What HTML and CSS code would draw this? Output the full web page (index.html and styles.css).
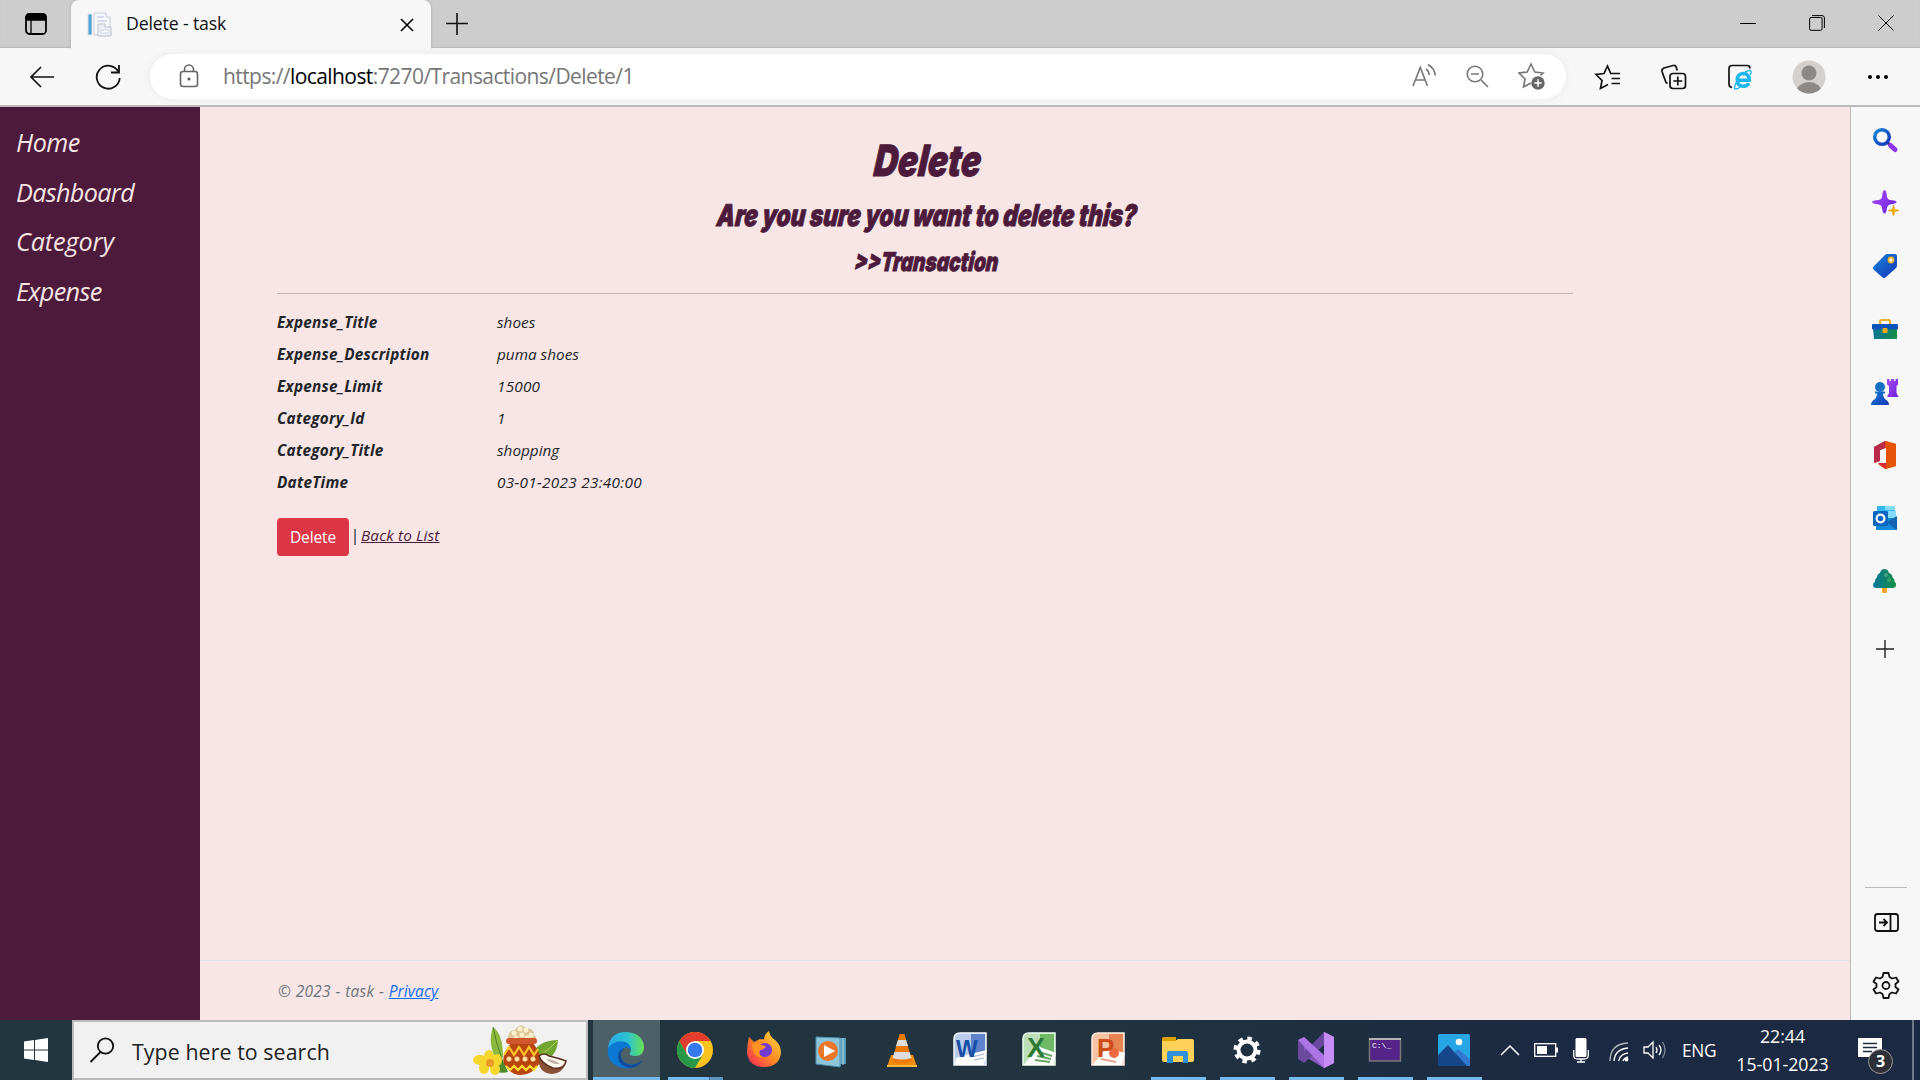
FILE: index.html
```html
<!DOCTYPE html>
<html lang="en">
<head>
<meta charset="utf-8">
<title>Delete - task</title>
<link rel="stylesheet" href="styles.css">
</head>
<body>
<div class="screen">
  <header class="tabs">
    <div class="workspace"><svg width="24" height="24" viewBox="0 0 24 24"><rect x="2" y="2" width="20" height="20" rx="3.5" fill="none" stroke="#000" stroke-width="1.8"/><path d="M2 8V5a3 3 0 0 1 3-3h14a3 3 0 0 1 3 3v3zM7 8v13" stroke="#000" stroke-width="1.3"/></svg></div>
    <div class="tab">
      <svg width="25" height="25" viewBox="0 0 25 25"><path d="M7 1h12l4 4v18H7z" fill="#f6f8fb" stroke="#c9ced8"/><path d="M19 1v4h4" fill="#fff" stroke="#c9ced8"/><path d="M1 2h4v21H1z" fill="#4ba0d6" stroke="#dde5ec"/><path d="M10 5h7M10 9h10" stroke="#d7dbea" stroke-width="2"/><path d="M11 12h7v3h6v9H11z" fill="#edf0f6" stroke="#b9bfcb"/><path d="M14 18h8v3h-8z" fill="#fff" stroke="#cfd3dd"/></svg>
      <span class="tab-title">Delete - task</span>
      <svg class="tab-close" width="14" height="14" viewBox="0 0 14 14"><path d="M1 1l12 12M13 1L1 13" stroke="#000" stroke-width="1.6"/></svg>
    </div>
    <svg class="new-tab" width="22" height="22" viewBox="0 0 22 22"><path d="M11 0v22M0 10.500h22" stroke="#111" stroke-width="1.6"/></svg>
    <div class="win">
      <svg width="16" height="16" viewBox="0 0 16 16"><path d="M0 8.500h16" stroke="#000"/></svg>
      <svg width="16" height="16" viewBox="0 0 16 16"><rect x=".6" y="2.500" width="12.500" height="12.800" rx="1.500" fill="none" stroke="#000"/><path d="M3 .6h10a2.400 2.400 0 0 1 2.400 2.400v10" fill="none" stroke="#000"/></svg>
      <svg width="16" height="16" viewBox="0 0 16 16"><path d="M.5.5l15 15M15.500.5l-15 15" stroke="#000"/></svg>
    </div>
  </header>

  <div class="toolbar">
    <svg class="back" width="26" height="24" viewBox="0 0 26 24"><path d="M25 12H2M12 2L2 12l10 10" fill="none" stroke="#111" stroke-width="1.7"/></svg>
    <svg class="reload" width="26" height="26" viewBox="0 0 26 26"><path d="M23.500 8A11.500 11.500 0 1 0 24.700 14" fill="none" stroke="#111" stroke-width="1.8"/><path d="M24 1v7.500h-8" fill="none" stroke="#111" stroke-width="1.8"/></svg>
    <div class="address">
      <svg class="lock" width="20" height="24" viewBox="0 0 20 24"><rect x="1.500" y="7.500" width="17" height="15" rx="2.500" fill="none" stroke="#666" stroke-width="1.6"/><path d="M5.500 7V5.500a4.500 4.500 0 0 1 9 0V7" fill="none" stroke="#666" stroke-width="1.6"/><circle cx="10" cy="15" r="1.500" fill="#555"/></svg>
      <span class="url">https://<b>localhost</b>:7270/Transactions/Delete/1</span>
      <div class="address-actions">
        <svg width="26" height="26" viewBox="0 0 26 26" fill="none" stroke="#767676" stroke-width="1.6"><path d="M1 23L8.300 4.500 15.500 23M3.500 17h9.500M14 6c2 1.200 3 3.200 3.200 6M16 1.500c4.500 2.500 6.700 6 7.300 11"/></svg>
        <svg width="26" height="26" viewBox="0 0 26 26" fill="none" stroke="#767676" stroke-width="1.6"><circle cx="10" cy="11" r="7.800"/><path d="M16 17l7 7M6 11h8"/></svg>
        <svg width="28" height="28" viewBox="0 0 28 28"><path d="M13 21l-7.500 4 1.500-8-6-6 8.200-1L13 2l3.800 8 8.200 1-2.500 2.300" fill="none" stroke="#767676" stroke-width="1.6"/><circle cx="20" cy="21" r="6.700" fill="#666"/><path d="M20 17.300v7.400M16.300 21h7.400" stroke="#fff" stroke-width="1.500"/></svg>
      </div>
    </div>
    <div class="tools">
      <svg width="28" height="28" viewBox="0 0 28 28" fill="none" stroke="#111" stroke-width="1.700"><path d="M14 21.500l-7.500 4 1.500-8-6-6 8-1L13.500 3l3.200 7.500H26M17.500 15.500H26M17.500 20.500H26"/></svg>
      <svg width="28" height="28" viewBox="0 0 28 28" fill="none" stroke="#111" stroke-width="1.700"><rect x="10" y="10.500" width="15.500" height="15" rx="3"/><path d="M17.800 13.500v9M13.300 18h9M7.500 20.500L6 19.500 2 8.500Q1.500 6 4 5l9-2.500q2.500-.5 3.200 1.500l1 3.500"/></svg>
      <svg width="28" height="28" viewBox="0 0 28 28"><path d="M6 24.500q-3-.5-3-3.500V5.500Q3 2.500 6 2.500h15q3 0 3 3" fill="none" stroke="#111" stroke-width="1.700"/><path d="M11.500 17.300H23.300Q23 10.500 17.300 10.500 11.300 10.800 11.300 17 11.500 23.300 17.300 23.300 21.300 23.300 22.800 20.300" fill="none" stroke="#1cb5ee" stroke-width="3.600"/><path d="M10.500 19q-3.500 7-1 7 2 0 4.500-1.800M19 9q5-2.500 6-.8.5 1.300-.8 4" fill="none" stroke="#1cb5ee" stroke-width="1.400"/></svg>
      <svg width="34" height="34" viewBox="0 0 34 34"><clipPath id="av"><circle cx="17" cy="17" r="16.500"/></clipPath><g clip-path="url(#av)"><circle cx="17" cy="17" r="17" fill="#d3d0cd"/><circle cx="17" cy="13" r="7.500" fill="#8d8986"/><ellipse cx="17" cy="32" rx="12.500" ry="10" fill="#8d8986"/></g></svg>
      <svg width="28" height="28" viewBox="0 0 28 28"><circle cx="6" cy="14" r="2"/><circle cx="14" cy="14" r="2"/><circle cx="22" cy="14" r="2"/></svg>
    </div>
  </div>

  <div class="viewport">
    <nav class="sidebar"><a>Home</a><a>Dashboard</a><a>Category</a><a>Expense</a></nav>
    <div class="page">
      <main class="container">
        <h1><span>Delete</span></h1>
        <h3><span>Are you sure you want to delete this?</span></h3>
        <h4><span>&gt;&gt;Transaction</span></h4>
        <hr>
        <dl>
          <dt>Expense_Title</dt><dd>shoes</dd>
          <dt>Expense_Description</dt><dd>puma shoes</dd>
          <dt>Expense_Limit</dt><dd class="num">15000</dd>
          <dt>Category_Id</dt><dd class="num">1</dd>
          <dt>Category_Title</dt><dd>shopping</dd>
          <dt>DateTime</dt><dd class="date">03-01-2023 23:40:00</dd>
        </dl>
        <form class="actions"><button type="button">Delete</button><i class="bar"></i><a>Back to List</a></form>
      </main>
      <footer><p>© 2023 - task - <a>Privacy</a></p></footer>
    </div>
    <aside class="rail">
      <svg width="28" height="28" viewBox="0 0 28 28"><defs><linearGradient id="bl" x2="1" y2="1"><stop stop-color="#1586d8"/><stop offset="1" stop-color="#1633b8"/></linearGradient><linearGradient id="pu" x2="1" y2="1"><stop stop-color="#a94bf8"/><stop offset="1" stop-color="#6a20dc"/></linearGradient><linearGradient id="gr" x2="1"><stop stop-color="#07749b"/><stop offset="1" stop-color="#169044"/></linearGradient></defs><path d="M17 17l3 3" stroke="#333" stroke-width="3"/><path d="M19.500 19.500l4.500 4" stroke="#8a35ea" stroke-width="5" stroke-linecap="round"/><circle cx="11" cy="11" r="7.300" fill="#fff" stroke="url(#bl)" stroke-width="3.500"/></svg>
      <svg width="28" height="28" viewBox="0 0 28 28"><path d="M13.500 1q2 0 2.500 7 .5 2.500 3 3 6.500.5 6.500 2t-6.500 2.500q-2.500.5-3 3-.5 6-2.500 6t-2.500-6q-.5-2.500-3-3Q1 14.500 1 13t7-2q2.500-.5 3-3 .5-7 2.500-7z" fill="url(#pu)"/><path d="M22.500 16q1 0 1.300 4.200 4.200.3 4.200 1.300t-4.200 1.300q-.3 4.200-1.300 4.200t-1.300-4.200Q17 22.500 17 21.500t4.200-1.300Q21.500 16 22.500 16z" fill="#f1a90d"/></svg>
      <svg width="28" height="28" viewBox="0 0 28 28"><path d="M14 3q1-1 2-1h8q2 0 2 2v9q0 2-1 3L15 25q-2 2-4 0l-8-7q-2-2 0-4z" fill="url(#bl)"/><circle cx="20" cy="8" r="2.500" fill="#fff" stroke="#f2b431" stroke-width="1.800"/></svg>
      <svg width="28" height="28" viewBox="0 0 28 28"><path d="M9 9V6.500Q9 5 10.500 5h7Q19 5 19 6.500V9" fill="none" stroke="#eeb12d" stroke-width="2.200"/><path d="M2 13h24v11H3z" fill="url(#gr)"/><rect x="1" y="9" width="26" height="5.500" rx="1" fill="#0b54b8"/><rect x="11.500" y="13" width="5" height="5" rx="1" fill="#f2a91c"/></svg>
      <svg width="28" height="28" viewBox="0 0 28 28"><path d="M16 1h2.500v2H20V1h3v2h1.500V1H27v5.500l-1.500 1.500v7l2 4H16l2-4V8l-2-1.500z" fill="url(#pu)"/><circle cx="9" cy="9" r="5" fill="#1870c4"/><path d="M4 13.500h10v2h-2q0 5 4 7 2 1 2 4.500H0q0-3.500 2-4.500 4-2 4-7H4z" fill="url(#bl)"/></svg>
      <svg width="28" height="30" viewBox="0 0 28 30"><path d="M14 1l11 3v22l-11 3-7-5 8-1V8l-6 2v11l-6 2V7z" fill="#e04412"/><path d="M14 1v7l-5 2v11l-6 2V7z" fill="#b8294a"/><path d="M15 1l10 3v22l-10 3z" fill="#e55409"/><path d="M7 23h8v6z" fill="#d42b32"/></svg>
      <svg width="28" height="28" viewBox="0 0 28 28"><path d="M6 2h18v12H6z" fill="#35b8f1"/><path d="M14 2h10v4H14zM17 7h8v7h-8z" fill="#83ddf7"/><path d="M5 14h21v12H5z" fill="#1389d8"/><path d="M16 18l10-6v14z" fill="#1164b0"/><rect x="2" y="7" width="15" height="15" rx="1.500" fill="#0967c2"/><circle cx="9.500" cy="14.500" r="3.900" fill="none" stroke="#fff" stroke-width="2.200"/></svg>
      <svg width="28" height="28" viewBox="0 0 28 28"><rect x="11" y="20" width="5" height="6" rx="1.500" fill="#f0a423"/><path d="M13.500 2q3.500 0 4.500 4 3.500 1 3.500 4.500 2.500 1.500 2 4 2 1.500 1.500 4-.5 2.500-3.500 2.500h-16Q2.500 21 2 18.500q0-2.500 2-4-.5-2.500 2-4Q6 7 9 6q1-4 4.500-4z" fill="url(#gr)"/><circle cx="15" cy="8" r="2" fill="#43a181"/><circle cx="18" cy="13" r="2" fill="#37a36c"/></svg>
      <svg class="rail-add" width="28" height="28" viewBox="0 0 28 28"><path d="M14 5v18M5 14h18" stroke="#222" stroke-width="1.400"/></svg>
      <div class="rail-foot">
        <svg width="28" height="24" viewBox="0 0 28 24" fill="none" stroke="#111" stroke-width="1.800"><rect x="3" y="3" width="23" height="17" rx="2.500"/><path d="M18.500 3v17M7 11.500h8M11.500 8l3.500 3.500-3.500 3.500"/></svg>
        <svg width="28" height="28" viewBox="0 0 28 28" fill="none" stroke="#111" stroke-width="1.800"><path d="M11.500 2h5l1 4 2.500 1.500 4-1 2.500 4-3 2.500v3l3 2.500-2.500 4-4-1-2.500 1.500-1 4h-5l-1-4L8 21.500l-4 1-2.500-4 3-2.500v-3l-3-2.500 2.500-4 4 1L10.500 6z" stroke-linejoin="round"/><circle cx="14" cy="14.500" r="3.500"/></svg>
      </div>
    </aside>
  </div>

  <div class="taskbar">
    <div class="start"><svg width="24" height="24" viewBox="0 0 24 24" fill="#fff"><path d="M0 3.400l10-1.400v9.500H0zM11 1.900L24 0v11.500H11zM0 12.500h10V22L0 20.600zM11 12.500h13V24l-13-1.900z"/></svg></div>
    <div class="search">
      <svg width="26" height="26" viewBox="0 0 26 26" fill="none" stroke="#111" stroke-width="1.800"><circle cx="16.500" cy="9" r="7.700"/><path d="M11.500 15L1.500 25"/></svg>
      <span>Type here to search</span>
      <svg class="pongal" width="94" height="52" viewBox="0 0 94 52"><path d="M20 3q10 7 10 30l-6 4Q14 20 20 3z" fill="#8cb93e"/><path d="M20 3q3 16 9 32" stroke="#53842a" fill="none"/><path d="M58 31q8-15 27-15-1 19-19 22z" fill="#71a62f"/><path d="M59 35q12-4 25-18" stroke="#bad15c" fill="none"/><path d="M19 47q10 3 16 1l-6-14z" fill="#4f8d2c"/><path d="M35 15Q35 6 42 6q5-8 11-2 8 0 8 7 3 2 2 6H35z" fill="#dcc69a"/><g fill="#fff0cc"><circle cx="41" cy="9" r="2.500"/><circle cx="47" cy="5" r="2.500"/><circle cx="53" cy="6" r="2.500"/><circle cx="58" cy="11" r="2.500"/><circle cx="49" cy="11" r="2.500"/><circle cx="43" cy="14" r="2.500"/><circle cx="54" cy="14" r="2.500"/></g><path d="M38 19h22q10 13 6 21-7 11-18 11-10 0-17-11-3-9 7-21z" fill="#b94510"/><rect x="33" y="14" width="31" height="6" rx="3" fill="#d0562b"/><path d="M31 31l5-8 5 8 5-8 5 8 5-8 5 8 4-6" fill="none" stroke="#ffc52c" stroke-width="2.200"/><g fill="#ffe1a0"><circle cx="36" cy="35" r="2.500"/><circle cx="44" cy="35" r="2.500"/><circle cx="52" cy="35" r="2.500"/><circle cx="60" cy="35" r="2.500"/></g><path d="M33 42l4 4 4-4 4 4 4-4 4 4 4-4 4 4 3-4" fill="none" stroke="#ffdf2d" stroke-width="2.200"/><g fill="#f5d62c"><ellipse cx="16" cy="33" rx="5" ry="7"/><ellipse cx="7" cy="36" rx="7" ry="5"/><ellipse cx="24" cy="36" rx="5" ry="6"/><ellipse cx="11" cy="44" rx="5" ry="6"/><ellipse cx="22" cy="45" rx="5" ry="6"/></g><circle cx="17" cy="39" r="4" fill="#ec9923"/><path d="M66 32q-2 17 13 18 12-1 14-13z" fill="#885034"/><path d="M66 32q5-4 10 0 9 2 17 5-2 9-13 7Q69 40 66 32z" fill="#fffaf0" stroke="#5b3322" stroke-width="1.500"/><path d="M73 35q8 0 14 5-8 1-14-5z" fill="#c4b5a9"/></svg>
    </div>
    <div class="apps">
      <div class="app active"><svg width="38" height="38" viewBox="0 0 38 38"><defs><linearGradient id="e1"><stop stop-color="#28a8e8"/><stop offset=".55" stop-color="#2bc3d1"/><stop offset="1" stop-color="#6be254"/></linearGradient></defs><path d="M1 17Q3 1 19 1q17 1 18 15 0 9-9 9-6 0-5-3 2-4-1-7-8-6-21 2z" fill="url(#e1)"/><path d="M1 17Q8 8 18 11q6 2 6 8-3-4-7-2-6 5-2 12 5 7 18 3-7 7-17 5Q-1 33 1 17z" fill="#0b78d3"/><path d="M17 17q-6 7-1 13 7 8 20-1-4 7-13 8-11-2-12-10-1-7 6-10z" fill="#124d9c"/></svg></div>
      <div class="app chrome"><svg width="38" height="38" viewBox="0 0 38 38"><circle cx="19" cy="19" r="18" fill="#fcc31e"/><path d="M3.400 10A18 18 0 0 1 34.600 10H19l-8 13.500z" fill="#e33b2e"/><path d="M3.400 10A18 18 0 0 0 19 37l7.800-13.500H11z" fill="#279847"/><circle cx="19" cy="19" r="9" fill="#fff"/><circle cx="19" cy="19" r="7.300" fill="#3579ec"/></svg></div>
      <div class="app"><svg width="38" height="38" viewBox="0 0 38 38"><defs><linearGradient id="ff" x1="1" x2="0" y2="1"><stop stop-color="#ffe33d"/><stop offset=".5" stop-color="#ff8a23"/><stop offset="1" stop-color="#f5205d"/></linearGradient></defs><path d="M4 6l5 5 6-3q5 0 4 1 0-6 5-9 1 6 6 9 6 5 6 13-2 14-17 14T2 22Q2 14 4 6z" fill="url(#ff)"/><circle cx="20" cy="19" r="7" fill="#6f3bd0"/><path d="M7 13q5-3 9 1l5 1q-2 4-6 4-2 5 3 8-10 0-11-14z" fill="#ff9421"/></svg></div>
      <div class="app nudge"><svg width="38" height="38" viewBox="0 0 38 38"><path d="M26 7h8v26h-8z" fill="#569dbb"/><path d="M28 7v28M31 7v27" stroke="#b9dde9"/><path d="M4 6l24 1v29L4 33z" fill="#8fc5d9" stroke="#4d91b0"/><circle cx="16" cy="20" r="10" fill="#ee7627"/><path d="M12 14l11 6-11 6z" fill="#fff"/></svg></div>
      <div class="app"><svg width="38" height="38" viewBox="0 0 38 38"><path d="M8 24h22l4 12H4z" fill="#f48a0b"/><path d="M16.500 3h5L29 30q-10 5-20 0z" fill="#ed7909"/><path d="M15 9h8l2 6H13zM11.500 21h15l2 6q-10 3-19 0z" fill="#ddd"/><path d="M4 35h30" stroke="#ffba3d" stroke-width="2"/></svg></div>
      <div class="app office-app"><svg width="38" height="38" viewBox="0 0 38 38"><path d="M9 2h26v32H3V8q0-6 6-6z" fill="#b9ccec" stroke="#f3f8ff" stroke-width="1.500"/><path d="M20 3h14v20H20z" fill="#5f82cb"/><path d="M5 27l14-4 17-4-3 15H4z" fill="#fff"/><path d="M21 26l12-3M23 29l10-2" stroke="#9cafc9"/><text x="5" y="26" class="office w">W</text></svg></div>
      <div class="app office-app"><svg width="38" height="38" viewBox="0 0 38 38"><path d="M9 2h26v32H3V8q0-6 6-6z" fill="#bbdfb8" stroke="#edffed" stroke-width="1.500"/><path d="M20 3h14v20H20z" fill="#70b967"/><path d="M5 32l15-16 16 6-3 12H4z" fill="#fff"/><path d="M19 21l13 4M17 25l14 3M15 29l15 2" stroke="#68a765" stroke-width="2"/><text x="7" y="26" class="office x">X</text></svg></div>
      <div class="app office-app"><svg width="38" height="38" viewBox="0 0 38 38"><path d="M9 2h26v32H3V8q0-6 6-6z" fill="#f5c4a7" stroke="#ffede3" stroke-width="1.500"/><path d="M20 3h14v20H20z" fill="#e88352"/><path d="M5 32l13-15 18 5-3 12H4z" fill="#fff"/><circle cx="25" cy="22" r="5" fill="#ed6a41"/><path d="M12 28l15 3" stroke="#e9a28a" stroke-width="2"/><text x="8" y="26" class="office p">P</text></svg></div>
      <div class="app open"><svg width="38" height="38" viewBox="0 0 38 38"><path d="M3 8q0-2 2-2h12v5H3z" fill="#dfa100"/><path d="M3 10h13l3-2h14q2 0 2 2v19q0 2-2 2H5q-2 0-2-2z" fill="#ffd159"/><path d="M8 32V22q0-2 2-2h17q2 0 2 2v10h-5v-7H14v7z" fill="#2e91dc"/></svg></div>
      <div class="app open"><svg width="38" height="38" viewBox="0 0 38 38" fill="none" stroke="#fff"><circle cx="19" cy="19" r="8.500" stroke-width="4"/><circle cx="19" cy="19" r="11.500" stroke-width="4" stroke-dasharray="4.516 4.516"/></svg></div>
      <div class="app open"><svg width="38" height="38" viewBox="0 0 38 38"><path d="M1 9l6-3 21 25 9-4-10 10L7 25z" fill="#8357ba"/><path d="M1 9l6 4v12l-6 3zM7 32L1 28 27 1l10 5-9 7z" fill="#6a489e"/><path d="M27 1l10 5v26l-10 5L1 9l6-3 20 18z" fill="#ac73e4"/><path d="M27 1l10 5v26l-10 5z" fill="#c58cf4"/></svg></div>
      <div class="app open"><svg width="38" height="38" viewBox="0 0 38 38"><rect x="3.500" y="8" width="31" height="22" fill="#552488" stroke="#777" stroke-width="1.500"/><path d="M3 8h32" stroke="#b4b4b4" stroke-width="2"/><text x="6" y="17" class="cmd">C:\_</text></svg></div>
      <div class="app open"><svg width="38" height="38" viewBox="0 0 38 38"><rect x="3" y="3" width="32" height="32" rx="1.500" fill="#28a5e5"/><path d="M19 22l4-4 12 10v7H22z" fill="#3278d0"/><path d="M3 24l10-10 19 21H3z" fill="#15468a"/><circle cx="24" cy="11" r="3.300" fill="#fff"/></svg></div>
    </div>
    <div class="tray">
      <svg class="chev" width="20" height="12" viewBox="0 0 20 12"><path d="M1 11l9-9 9 9" fill="none" stroke="#fff" stroke-width="1.500"/></svg>
      <svg class="batt" width="24" height="14" viewBox="0 0 24 14"><rect x=".7" y=".7" width="21" height="12.600" fill="none" stroke="#fff" stroke-width="1.300"/><path d="M3 3h10v8H3zM22 4.500h2v5h-2z" fill="#fff"/></svg>
      <svg class="mic" width="16" height="26" viewBox="0 0 16 26"><rect x="2.500" y="1" width="11" height="19" rx="1.500" fill="#fff"/><path d="M.7 13v5q0 4 4 4h6.600q4 0 4-4v-5M8 22v3M4 25h8" fill="none" stroke="#fff" stroke-width="1.300"/></svg>
      <svg class="wifi" width="20" height="20" viewBox="0 0 20 20" fill="none" stroke="#fff" stroke-width="1.300"><path d="M1 19Q1 2 19 1" opacity=".65"/><path d="M5 19Q6 7 19 6M9.500 19Q11 12 19 11M14 19q1-3 5-4"/><circle cx="17.500" cy="17.500" r="1.300" fill="#fff"/></svg>
      <svg class="sound" width="24" height="20" viewBox="0 0 24 20" fill="none" stroke="#fff" stroke-width="1.300"><path d="M1 7h4l5-5v16l-5-5H1zM13 7q2 3 0 6M16 5q4 5 0 10"/><path d="M19.500 2q5 8 0 16" opacity=".45"/></svg>
      <span class="lang">ENG</span>
      <div class="clock"><span>22:44</span><span>15-01-2023</span></div>
      <div class="notice"><svg width="26" height="26" viewBox="0 0 26 26"><path d="M1 1h24v19h-8l-5 5v-5H1z" fill="#fff"/><path d="M6 6.500h14M6 10.500h14M6 14.500h9" stroke="#1b2a40" stroke-width="1.300"/></svg><b>3</b></div>
    </div>
    <div class="show-desktop"></div>
  </div>
</div>
</body>
</html>
```
FILE: styles.css
```css
* { box-sizing: border-box; }
body { margin: 0; font-family: "Open Sans", "Noto Sans", sans-serif; color: #212529; overflow: hidden; }
svg { display: block; flex: none; }
.screen { width: 1920px; height: 1080px; display: flex; flex-direction: column; background: #f7f7f7; }

/* tab strip */
.tabs { height: 48px; flex: none; display: flex; background: #cdcdcd; box-shadow: inset 0 -2px 2px -1px #b5b5b5; }
.workspace { width: 71px; padding: 12px 0 0 24px; }
.tab { width: 360px; height: 49px; background: #f7f7f7; border-radius: 8px 8px 0 0; display: flex; align-items: center; padding: 0 17px 0 16px; box-shadow: 0 0 3px #aaa; clip-path: inset(0 -3px 0 -3px); }
.tab-title { margin: 0 0 3px 14px; font-size: 17.700px; letter-spacing: -.15px; color: #111; white-space: nowrap; }
.tab-close { margin-left: auto; }
.new-tab { margin: 13px 0 0 15px; }
.win { margin: 15px 26px 0 auto; display: flex; gap: 53px; }

/* toolbar */
.toolbar { height: 57px; flex: none; display: flex; align-items: center; background: #f7f7f7; }
.back { margin-left: 29px; }
.reload { margin-left: 40px; }
.address { margin: 0 0 1px 29px; width: 1416px; height: 45px; background: #fff; border-radius: 23px; display: flex; align-items: center; box-shadow: 0 0 8px #e8e8e8; }
.lock { margin-left: 29px; }
.url { margin-left: 24px; font-size: 21px; color: #767676; letter-spacing: -.58px; white-space: nowrap; }
.url b { font-weight: 400; color: #000; }
.address-actions { margin: 0 20px 0 auto; display: flex; align-items: center; gap: 27px; }
.tools { display: flex; align-items: center; gap: 38px; margin-left: 28px; }

/* browser viewport */
.viewport { height: 915px; flex: none; display: flex; border-top: 2px solid #bbb; }
.sidebar { width: 200px; background: #4c1a3b; padding: 11px 16px; display: flex; flex-direction: column; }
.sidebar a { height: 49.600px; line-height: 49.600px; font-size: 25.200px; font-style: italic; letter-spacing: -.5px; color: #f7e5e4; }
.sidebar a:nth-child(2) { letter-spacing: -.65px; }
.sidebar a:nth-child(3) { letter-spacing: -.1px; }
.sidebar a:nth-child(4) { letter-spacing: -.65px; }
.page { width: 1650px; background: #f7e6e5; display: flex; flex-direction: column; }
.container { width: 1296px; margin-left: 77px; flex: 1; }
h1, h3, h4 { margin: 0; font-family: Inter, Roboto, sans-serif; font-weight: 900; font-style: italic; text-align: center; color: #4c1a3b; white-space: nowrap; -webkit-text-stroke: .9px #4c1a3b; }
h1 span, h3 span, h4 span { display: inline-block; margin-left: 4px; }
h1 span { transform: scaleX(.775) skewX(-7deg); margin-left: 6px; }
h3 span { transform: scaleX(.757) skewX(-7deg); }
h4 span { transform: scaleX(.735) skewX(-7deg); }
h1 { font-size: 43px; line-height: 48px; margin-top: 29px; }
h3 { font-size: 30px; line-height: 34px; margin-top: 14px; }
h4 { font-size: 26px; line-height: 29px; margin-top: 15px; }
hr { margin: 17px 0 15px; border: 0; border-top: 1px solid #c6b0b6; }
dl { margin: 0; display: grid; grid-template-columns: 220px 1fr; grid-auto-rows: 32px; font-size: 15.300px; font-style: italic; line-height: 26px; }
dt { font-weight: 700; letter-spacing: .25px; }
dd { margin: 0; }
.num { letter-spacing: .2px; }
.date { letter-spacing: .3px; }
.actions { margin-top: 17px; display: flex; align-items: flex-start; }
button { width: 72px; height: 38px; border: 0; border-radius: 4px; background: #dc3545; color: #fff; font: 15.500px "Open Sans", sans-serif; letter-spacing: -.1px; padding: 0; }
.bar { width: 2px; height: 16px; margin: 11px 0 0 5px; background: linear-gradient(90deg, #b27a48 50%, #4777b8 50%); }
.actions a { margin: 4px 0 0 5px; font-size: 15.300px; letter-spacing: .15px; line-height: 26px; font-style: italic; color: #4c1a3b; text-decoration: underline; }
footer { height: 60px; border-top: 1px solid #dee2e6; padding-left: 78px; color: #6c757d; font-style: italic; font-size: 15.500px; line-height: 61px; letter-spacing: .2px; }
footer p { margin: 0; word-spacing: .5px; }
footer a { color: #0d6efd; text-decoration: underline; letter-spacing: .1px; }

/* edge sidebar */
.rail { width: 70px; border-left: 1px solid #bbb; display: flex; flex-direction: column; align-items: center; padding: 19px 0 0; gap: 35px; background: #f7f7f7; }
.rail > svg { margin-right: 1px; }
.rail svg:nth-child(6) { margin: -1px 1px -1px 0; }
.rail-add { margin-top: 5px; }
.rail-foot { width: 42px; height: 133px; margin-top: auto; border-top: 1px solid #bbb; padding-top: 23px; display: flex; flex-direction: column; align-items: center; gap: 36px; }

/* taskbar */
.taskbar { height: 60px; flex: none; display: flex; background: linear-gradient(90deg, #22363f, #21343f 55%, #1b2a42 80%, #1b2942); }
.start { width: 72px; padding: 18px 24px; }
.search { width: 516px; height: 60px; border: 2px solid #bbb; background: #f1f1f1; display: flex; align-items: center; padding: 0 19px 0 15px; }
.search span { margin: 2px 0 0 17px; font-size: 21.300px; color: #222; letter-spacing: .1px; white-space: nowrap; }
.pongal { margin-left: auto; }
.apps { display: flex; margin-left: 5px; gap: 2px; }
.app { position: relative; width: 67px; height: 60px; display: flex; justify-content: center; padding: 11px 2px 0 0; }
.nudge { padding-right: 5px; }
.office-app { padding-right: 3px; }
.active { background: #4c6068; border-bottom: 3px solid #76b9ed; }
.open::after, .chrome::after { content: ""; position: absolute; left: 6px; bottom: 0; width: 55px; height: 3px; background: #76b9ed; }
.chrome::after { background: linear-gradient(90deg, #76b9ed 74%, #416d91 74%, #416d91 77%, #5b92be 77%); }
.office { font: bold 26px "Liberation Sans", sans-serif; }
.w { fill: #164fa6; font-size: 23px; }
.x { fill: #2c7a35; font-size: 27px; }
.p { fill: #cf4d18; }
.cmd { font: 8px "Liberation Mono", monospace; fill: #fff; }
.tray { display: flex; align-items: center; color: #fff; margin-left: 12px; }
.batt { margin-left: 14px; }
.mic { margin-left: 15px; }
.wifi { margin: 4px 0 0 20px; }
.sound { margin-left: 14px; }
.lang { margin-left: 15px; width: 54px; font-size: 17.300px; letter-spacing: -.3px; }
.clock { width: 93px; display: flex; flex-direction: column; align-items: center; font-size: 17.700px; line-height: 28px; padding-bottom: 1px; white-space: nowrap; }
.notice { position: relative; margin-left: 28px; width: 37px; }
.notice b { position: absolute; left: 11px; top: 12px; width: 25px; height: 25px; border-radius: 50%; border: 1px solid #999; background: #2d3037; font-size: 16px; line-height: 23px; text-align: center; }
.show-desktop { width: 2px; margin-left: auto; margin-right: 6px; background: #6d7888; }
```
